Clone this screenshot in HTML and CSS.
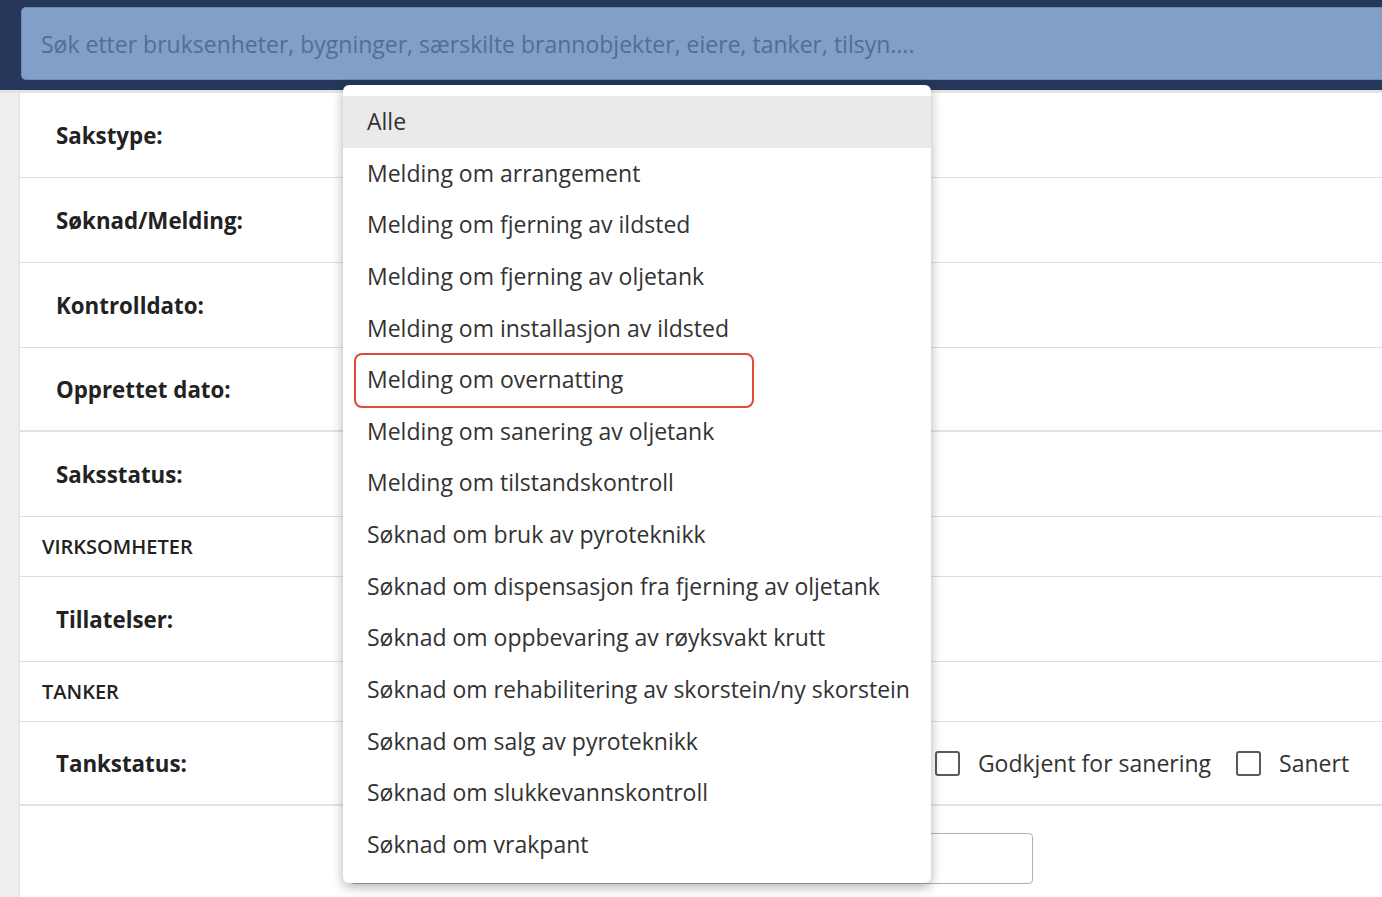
FILE: index.html
```html
<!DOCTYPE html>
<html lang="no">
<head>
    <meta charset="UTF-8">
    <meta name="viewport" content="width=device-width, initial-scale=1.0">
    <title>Saker</title>
    <link rel="stylesheet" href="styles.css">
</head>
<body>
    <header class="topbar">
        <input class="search" type="text" placeholder="Søk etter bruksenheter, bygninger, særskilte brannobjekter, eiere, tanker, tilsyn....">
    </header>
    <div class="page">
        <div class="side"></div>
        <main class="panel">
            <div class="row"><span class="label">Sakstype:</span></div>
            <div class="row"><span class="label">Søknad/Melding:</span></div>
            <div class="row"><span class="label">Kontrolldato:</span></div>
            <div class="row row-end"><span class="label">Opprettet dato:</span></div>
            <div class="row"><span class="label">Saksstatus:</span></div>
            <div class="section">VIRKSOMHETER</div>
            <div class="row"><span class="label">Tillatelser:</span></div>
            <div class="section">TANKER</div>
            <div class="row row-end">
                <span class="label">Tankstatus:</span>
                <div class="checks">
                    <label class="check"><span class="box"></span>Godkjent for sanering</label>
                    <label class="check"><span class="box"></span>Sanert</label>
                </div>
            </div>
            <div class="bottom">
                <input class="field" type="text">
            </div>
        </main>
    </div>

    <ul class="dropdown">
        <li class="item active">Alle</li>
        <li class="item">Melding om arrangement</li>
        <li class="item">Melding om fjerning av ildsted</li>
        <li class="item">Melding om fjerning av oljetank</li>
        <li class="item">Melding om installasjon av ildsted</li>
        <li class="item">Melding om overnatting<span class="mark"></span></li>
        <li class="item">Melding om sanering av oljetank</li>
        <li class="item">Melding om tilstandskontroll</li>
        <li class="item">Søknad om bruk av pyroteknikk</li>
        <li class="item">Søknad om dispensasjon fra fjerning av oljetank</li>
        <li class="item">Søknad om oppbevaring av røyksvakt krutt</li>
        <li class="item">Søknad om rehabilitering av skorstein/ny skorstein</li>
        <li class="item">Søknad om salg av pyroteknikk</li>
        <li class="item">Søknad om slukkevannskontroll</li>
        <li class="item">Søknad om vrakpant</li>
    </ul>
</body>
</html>
```

FILE: styles.css
```css
body {
    font-family: "Open Sans", "Noto Sans", sans-serif;
    margin: 0;
    padding: 0;
    background-color: #eeeeee;
    color: #222;
    overflow: hidden;
}
.topbar {
    background-color: #25375a;
    padding: 7px 0 10px 21px;
    height: 73px;
}
.search {
    display: block;
    width: 100%;
    height: 73px;
    box-sizing: border-box;
    background-color: #819fc7;
    border: 1px solid #6f8cb5;
    border-right: none;
    border-radius: 5px 0 0 5px;
    padding: 0 19px;
    font-family: inherit;
    font-size: 23px;
    color: #4a5d7c;
}
.search::placeholder {
    color: #566d90;
}
.page {
    display: flex;
    border-top: 3px solid #e3e3e3;
}
.side {
    width: 19px;
    background-color: #eeeeee;
    border-right: 1px solid #e2e2e2;
}
.panel {
    flex: 1;
    background: #fff;
    height: 810px;
}
.row {
    display: flex;
    align-items: center;
    height: 84px;
    border-bottom: 1px solid #dedede;
}
.row-end {
    border-bottom: 2px solid #e3e3e3;
    height: 82px;
}
.label {
    padding-left: 36px;
    font-weight: 700;
    font-size: 22.3px;
    color: #222;
}
.section {
    display: flex;
    align-items: center;
    height: 59px;
    padding-left: 22px;
    font-size: 20px;
    font-weight: 600;
    border-bottom: 1px solid #dedede;
}
.checks {
    display: flex;
    gap: 25px;
    margin-left: 748px;
}
.check {
    display: flex;
    align-items: center;
    font-size: 23px;
    color: #333;
}
.box {
    width: 21px;
    height: 21px;
    border: 2px solid #5a5a5a;
    border-radius: 3px;
    margin-right: 18px;
}
.bottom {
    padding: 27px 0 0 330px;
}
.field {
    display: block;
    width: 683px;
    height: 51px;
    box-sizing: border-box;
    border: 1px solid #a9b3c6;
    border-radius: 4px;
}
.dropdown {
    position: absolute;
    left: 343px;
    top: 85px;
    width: 588px;
    margin: 0;
    padding: 11px 0 12px;
    list-style: none;
    background: #fff;
    border-radius: 6px;
    box-shadow: 0 4px 12px rgba(0, 0, 0, 0.3);
}
.item {
    position: relative;
    height: 51.65px;
    line-height: 51.65px;
    padding-left: 24px;
    font-size: 23px;
    color: #333;
}
.item.active {
    background-color: #eaeaea;
}
.mark {
    position: absolute;
    left: 11px;
    top: -1px;
    width: 400px;
    height: 55px;
    border: 2.5px solid #e04b35;
    border-radius: 8px;
    box-sizing: border-box;
}
```
